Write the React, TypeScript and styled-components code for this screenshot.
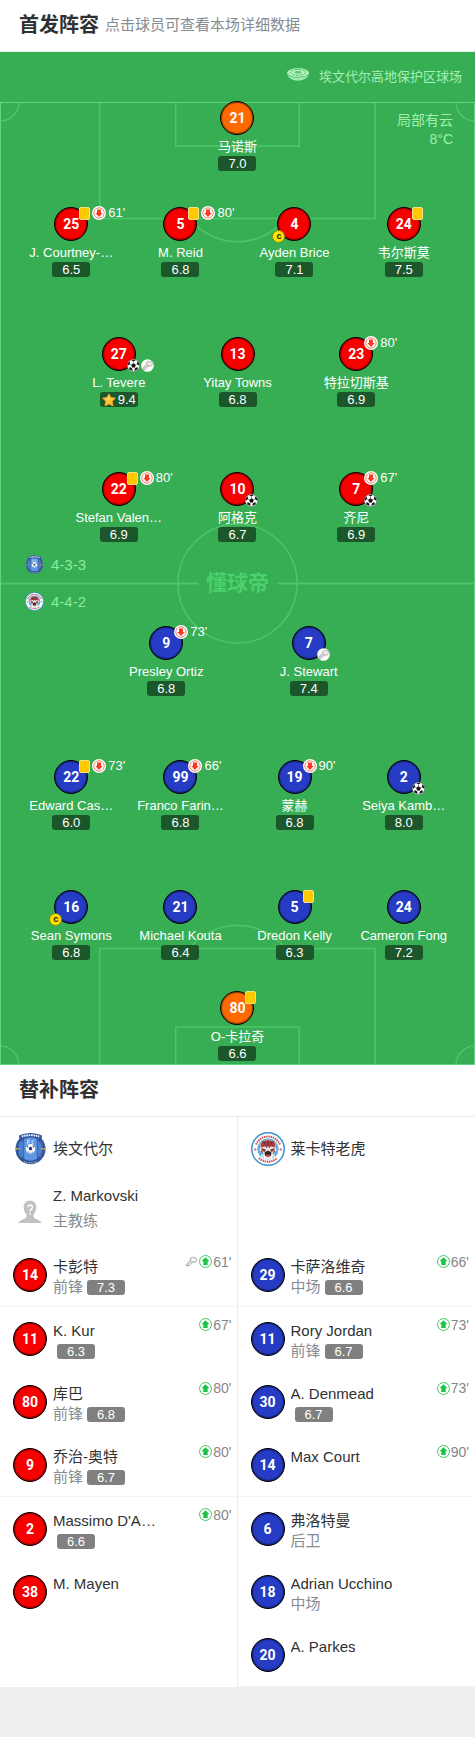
import React from "react";
import styled, { createGlobalStyle, css } from "styled-components";

const GlobalStyle = createGlobalStyle`
  * { box-sizing: border-box; }
  body {
    margin: 0;
    background: #eeeff1;
    color: #303133;
    font-family: "Liberation Sans", "Noto Sans CJK SC", sans-serif;
  }
  h2, h3, p, ul { margin: 0; padding: 0; font-weight: normal; }
  ul { list-style: none; }
`;

type Tone = "red" | "blue" | "orange";

interface Player {
  no: number;
  name: string;
  rating: string;
  card?: boolean;
  off?: string;
  goal?: boolean;
  assist?: boolean;
  captain?: boolean;
  best?: boolean;
}

interface Line {
  space: number;
  tone: Tone;
  players: Player[];
}

interface Substitute {
  no: number;
  name: string;
  role?: string;
  rating?: string;
  on?: string;
  assist?: boolean;
}

const lines: Line[] = [
  { space: 36, tone: "orange", players: [{ no: 21, name: "马诺斯", rating: "7.0" }] },
  {
    space: 60,
    tone: "red",
    players: [
      { no: 25, name: "J. Courtney-…", rating: "6.5", card: true, off: "61'" },
      { no: 5, name: "M. Reid", rating: "6.8", card: true, off: "80'" },
      { no: 4, name: "Ayden Brice", rating: "7.1", captain: true },
      { no: 24, name: "韦尔斯莫", rating: "7.5", card: true },
    ],
  },
  {
    space: 65,
    tone: "red",
    players: [
      { no: 27, name: "L. Tevere", rating: "9.4", goal: true, assist: true, best: true },
      { no: 13, name: "Yitay Towns", rating: "6.8" },
      { no: 23, name: "特拉切斯基", rating: "6.9", off: "80'" },
    ],
  },
  {
    space: 84,
    tone: "red",
    players: [
      { no: 22, name: "Stefan Valen…", rating: "6.9", card: true, off: "80'" },
      { no: 10, name: "阿格克", rating: "6.7", goal: true },
      { no: 7, name: "齐尼", rating: "6.9", off: "67'", goal: true },
    ],
  },
  {
    space: 64,
    tone: "blue",
    players: [
      { no: 9, name: "Presley Ortiz", rating: "6.8", off: "73'" },
      { no: 7, name: "J. Stewart", rating: "7.4", assist: true },
    ],
  },
  {
    space: 60,
    tone: "blue",
    players: [
      { no: 22, name: "Edward Cas…", rating: "6.0", card: true, off: "73'" },
      { no: 99, name: "Franco Farin…", rating: "6.8", off: "66'" },
      { no: 19, name: "蒙赫", rating: "6.8", off: "90'" },
      { no: 2, name: "Seiya Kamb…", rating: "8.0", goal: true },
    ],
  },
  {
    space: 31,
    tone: "blue",
    players: [
      { no: 16, name: "Sean Symons", rating: "6.8", captain: true },
      { no: 21, name: "Michael Kouta", rating: "6.4" },
      { no: 5, name: "Dredon Kelly", rating: "6.3", card: true },
      { no: 24, name: "Cameron Fong", rating: "7.2" },
    ],
  },
  { space: 4, tone: "orange", players: [{ no: 80, name: "O-卡拉奇", rating: "6.6", card: true }] },
];

const homeBench: Substitute[] = [
  { no: 14, name: "卡彭特", role: "前锋", rating: "7.3", on: "61'", assist: true },
  { no: 11, name: "K. Kur", rating: "6.3", on: "67'" },
  { no: 80, name: "库巴", role: "前锋", rating: "6.8", on: "80'" },
  { no: 9, name: "乔治-奥特", role: "前锋", rating: "6.7", on: "80'" },
  { no: 2, name: "Massimo D'A…", rating: "6.6", on: "80'" },
  { no: 38, name: "M. Mayen" },
];

const awayBench: Substitute[] = [
  { no: 29, name: "卡萨洛维奇", role: "中场", rating: "6.6", on: "66'" },
  { no: 11, name: "Rory Jordan", role: "前锋", rating: "6.7", on: "73'" },
  { no: 30, name: "A. Denmead", rating: "6.7", on: "73'" },
  { no: 14, name: "Max Court", on: "90'" },
  { no: 6, name: "弗洛特曼", role: "后卫" },
  { no: 18, name: "Adrian Ucchino", role: "中场" },
  { no: 20, name: "A. Parkes" },
];

/* ---------- layout ---------- */

const Page = styled.main`
  width: 100%;
`;

const SectionHeader = styled.header`
  display: flex;
  align-items: center;
  gap: 6px;
  height: 52px;
  padding: 0 19px 1px;
  background: #fff;
  border-bottom: 1px solid #ebebeb;
`;

const Title = styled.h2`
  font-size: 20px;
  font-weight: bold;
  line-height: 28px;
`;

const Hint = styled.p`
  font-size: 15px;
  line-height: 22px;
  color: #868b91;
`;

const Starters = styled.section`
  background: #37ae54;
`;

const Venue = styled.div`
  display: flex;
  justify-content: flex-end;
  align-items: center;
  gap: 10px;
  height: 49px;
  padding: 0 13px;
  font-size: 13px;
  line-height: 20px;
  color: #a5f0b4;

  svg {
    margin-bottom: 4px;
  }
`;

const Pitch = styled.div`
  position: relative;
`;

const Markings = styled.svg`
  position: absolute;
  top: 1px;
  left: 0;
  width: 100%;
  height: calc(100% - 1px);
  fill: none;
  stroke: #4dc56b;
  stroke-width: 1.5;
`;

const Watermark = styled.span`
  position: absolute;
  top: 50%;
  left: 50%;
  transform: translate(-50%, -50%);
  padding: 0 8px;
  background: #37ae54;
  color: #4ad06c;
  font-size: 21px;
  font-weight: bold;
  line-height: 24px;
`;

const Weather = styled.p`
  position: absolute;
  top: 10px;
  right: 22px;
  font-size: 14px;
  line-height: 19px;
  text-align: right;
  color: #a0eeb0;
`;

const Formations = styled.div`
  position: absolute;
  top: 50%;
  left: 25px;
  transform: translateY(-50%);
  display: grid;
  gap: 18px;
`;

const Formation = styled.p`
  display: flex;
  align-items: center;
  gap: 7px;
  font-size: 15px;
  line-height: 19px;
  color: #8deb9f;
`;

const LineUp = styled.div`
  position: relative;
`;

const Row = styled.div<{ $space: number }>`
  display: flex;
  justify-content: center;
  padding-bottom: ${(p) => p.$space}px;
`;

const cellWidth: Record<number, string> = { 1: "25%", 2: "30%", 3: "25%", 4: "23%" };

const Cell = styled.div<{ $count: number }>`
  display: flex;
  justify-content: center;
  width: ${(p) => cellWidth[p.$count]};
  ${(p) =>
    p.$count === 4 &&
    css`
      &:nth-child(3) {
        margin-left: 1%;
      }
    `}
`;

const PlayerButton = styled.button`
  display: flex;
  flex-direction: column;
  align-items: center;
  padding: 0;
  border: 0;
  background: none;
  color: #fff;
  font: inherit;
  font-size: 13px;
  white-space: nowrap;
  cursor: pointer;
`;

const Shirt = styled.span`
  position: relative;
  width: 34px;
  height: 34px;
`;

const tones: Record<Tone, string> = { red: "#f70000", blue: "#263cc4", orange: "#ff6a00" };

const ShirtNumber = styled.span<{ $tone: Tone }>`
  display: flex;
  flex: none;
  justify-content: center;
  align-items: center;
  width: 34px;
  height: 34px;
  border: 1px solid #000;
  border-radius: 50%;
  box-shadow: inset 0 0 1px 1px rgba(0, 0, 0, 0.45);
  background: ${(p) => tones[p.$tone]};
  color: #fff;
  font-family: Roboto, sans-serif;
  font-size: 14px;
  font-weight: bold;
  line-height: 16px;
`;

const Events = styled.span<{ $edge: "top" | "bottom" }>`
  position: absolute;
  left: 25px;
  ${(p) => p.$edge}: -1px;
  display: flex;
  align-items: center;
  gap: ${(p) => (p.$edge === "top" ? 2 : 1)}px;
  height: 14px;
  line-height: 14px;
`;

const Captain = styled.span`
  position: absolute;
  left: -5px;
  bottom: -2px;
  width: 13px;
  height: 13px;
  border: 1px solid #8a8a10;
  border-radius: 50%;
  background: #ffe100;
  color: #222;
  font-size: 9px;
  font-weight: bold;
  line-height: 10px;
  text-align: center;
`;

const YellowCard = styled.span`
  width: 11px;
  height: 13px;
  border: 1px solid #f5de8c;
  border-radius: 2px;
  background: #ffc900;
`;

const PlayerName = styled.span`
  padding-top: 3px;
  line-height: 18px;
`;

const Rating = styled.span<{ $bench?: boolean }>`
  display: flex;
  justify-content: center;
  align-items: center;
  gap: 2px;
  width: 38px;
  height: 15px;
  margin-left: ${(p) => (p.$bench ? 4 : 0)}px;
  border-radius: 3px;
  background: ${(p) => (p.$bench ? "#808080" : "#1b572a")};
  color: #fff;
  font-size: 13px;
  line-height: 15px;
`;

const Bench = styled.section`
  display: grid;
  grid-template-columns: 1fr 1fr;
  min-height: 570px;
  background: #fff;
`;

const BenchList = styled.ul`
  display: grid;
  grid-template-columns: minmax(0, 1fr);
  grid-template-rows: repeat(9, 1fr);
  & + & {
    border-left: 1px solid #ebebeb;
    margin-left: -1px;
  }
`;

const BenchRow = styled.li`
  display: flex;
  align-items: center;
  gap: 6px;
  padding: 0 6px 0 13px;
  &:nth-child(3n) {
    border-bottom: 1px solid #f5f5f5;
  }
`;

const Emblem = styled.span`
  display: flex;
  flex: none;
  align-items: center;
  justify-content: center;
  width: 34px;
  height: 34px;
`;

const TeamName = styled.h3`
  font-size: 15px;
  line-height: 22px;
`;

const Person = styled.div<{ $staff?: boolean }>`
  flex: 1;
  min-width: 0;
  font-size: 15px;
  line-height: ${(p) => (p.$staff ? 25 : 20)}px;
  padding: ${(p) => (p.$staff ? "0 0 7px" : "5px 0 0")};
`;

const PersonName = styled.p`
  overflow: hidden;
  text-overflow: ellipsis;
  white-space: nowrap;
`;

const Detail = styled.div`
  display: flex;
  align-items: center;
  min-height: 20px;
  color: #868b91;
`;

const Entry = styled.span`
  display: flex;
  align-self: flex-start;
  align-items: center;
  gap: 1px;
  margin-top: 8px;
  font-size: 14px;
  line-height: 20px;
  color: #868686;
`;

/* ---------- drawings ---------- */

const SubOff = () => (
  <svg width="14" height="14" viewBox="0 0 14 14" aria-label="换下">
    <circle cx="7" cy="7" r="7" fill="#fff" />
    <circle cx="7" cy="7" r="5.2" fill="none" stroke="#f0644a" strokeWidth="0.8" />
    <path d="M5 3.6h4v3.4h1.700L7 10.900 3.300 7h1.700z" fill="#fb3a22" />
  </svg>
);

const SubOn = () => (
  <svg width="13" height="13" viewBox="0 0 12 12" aria-label="换上">
    <circle cx="6" cy="6" r="5.5" fill="#fff" stroke="#3cc65a" strokeWidth="0.9" />
    <path d="M6 2 9.700 5.700H8V9.300H4V5.700H2.300z" fill="#1fc144" />
  </svg>
);

const Ball = () => (
  <svg width="13" height="13" viewBox="0 0 26 26" aria-label="进球">
    <circle cx="13" cy="13" r="12.4" fill="#fff" stroke="#555" strokeWidth="1" />
    <path
      d="M13 8.4l4.6 3.3-1.8 5.3h-5.6l-1.8-5.3zM8.4 1.8h9.2L13 5.2zM1.2 9.4l4.4-5 .4 5.5-4.4 3.6zM24.8 9.4l-4.4-5-.4 5.5 4.4 3.6zM4.2 20.6l1.2-4.8 4.9 3.3 1 5zM21.8 20.6l-1.2-4.8-4.9 3.3-1 5z"
      fill="#111"
    />
    <path d="M13 5v3.5M6 10l2.5 1.8M20 10l-2.5 1.8M10.2 17l-1.5 2.5M15.8 17l1.5 2.5" stroke="#333" strokeWidth="1" />
  </svg>
);

const bootPath = "M2.500 19 11 10.500 11.500 6 15 4.500 17.500 6 20.500 5 23 8.500 21.500 13.500 15 14.500 8.500 20.500 3.500 22z";

const Boot = ({ disc }: { disc?: boolean }) => (
  <svg width="13" height="13" viewBox="0 0 26 26" aria-label="助攻">
    {disc && <circle cx="13" cy="13" r="12.6" fill="#fff" />}
    <path d={bootPath} fill={disc ? "#eee" : "#fff"} stroke={disc ? "#999" : "#777"} strokeWidth="1.400" strokeLinejoin="round" />
    <path d="M11 10.500l5 3.500M4.500 20l9-7.500" stroke="#888" strokeWidth="1.200" />
  </svg>
);

const Star = () => (
  <svg width="14" height="14" viewBox="0 0 14 14" aria-label="最佳">
    <path
      d="M7 .8l1.9 3.7 4.500.7-3.200 3.100.8 4.600L7 10.900l-4 2 .8-4.600L.6 5.200l4.500-.7z"
      fill="#ffc233"
      stroke="#f8a21f"
      strokeWidth="0.9"
      strokeLinejoin="round"
    />
    <path d="M7 2.500L5.800 5.400 3 5.800 7 7z" fill="#ffe58a" />
  </svg>
);

const StadiumIcon = () => (
  <svg width="22" height="13" viewBox="0 0 22 13" aria-hidden="true">
    <path d="M0 5.200C0 2.300 5 .2 11 .2s11 2.100 11 5c0 1-.5 1.800-1 2.500-1.500 2.800-5.500 4.800-10 4.800S2.500 10.500 1 7.700C.5 7 0 6.200 0 5.200z" fill="#b4f5c0" />
    <ellipse cx="11" cy="4.300" rx="7.600" ry="2.900" fill="none" stroke="#37ae54" strokeWidth="0.8" strokeDasharray="3 .7" />
    <ellipse cx="11" cy="4.200" rx="3.600" ry="1.200" fill="#5cc676" />
    <path d="M.4 6c3 4.500 18.200 4.500 21.200 0" fill="none" stroke="#37ae54" strokeWidth="0.8" />
    <path d="M2.500 9c4 3 13 3 17 0" fill="none" stroke="#6fd487" strokeWidth="0.500" />
  </svg>
);

const HomeCrest = ({ size }: { size: number }) => (
  <svg width={size} height={size} viewBox="0 0 34 34" aria-hidden="true">
    <ellipse cx="17" cy="17.500" rx="15.500" ry="15.800" fill="#2f55a4" />
    <path d="M5 3.800C12 0 22 0 29 3.800L27.500 10h-21z" fill="#2f55a4" />
    <circle cx="17" cy="17.500" r="11.800" fill="#4a80cf" />
    <path d="M10 7.500c4-2 10-2 14 0v19.800c-4 2.600-10 2.600-14 0z" fill="#5f97e2" />
    <path d="M10 7.500v19.800M24 7.500v19.800" stroke="#2f62b5" strokeWidth="1" />
    <path d="M8 4.700c5.500-2 12.500-2 18 0" fill="none" stroke="#e6edf9" strokeWidth="2" strokeDasharray="1.800 .6" />
    <path d="M10.500 30.500c4 1.700 9 1.700 13 0" fill="none" stroke="#a9a68b" strokeWidth="1.500" strokeDasharray="1.400 1" />
    <path d="M14 8.500v4M14 8.500h2.500M14 10.500h2M20.500 8.900c-2.500-1-2.500 4 0 3.200" fill="none" stroke="#d5e3fa" strokeWidth="1" />
    <path d="M2 17.500h4M28 17.500h4" stroke="#d6c24b" strokeWidth="1.800" strokeDasharray="1.500 1" />
    <path d="M26.500 9c1.500 2 2.300 4 2.500 6M26.500 26c1.500-2 2.300-4 2.500-6" fill="none" stroke="#c4506a" strokeWidth="0.900" />
    <path d="M7.500 9C6 11 5.200 13 5 15M7.500 26C6 24 5.200 22 5 20" fill="none" stroke="#5fae7d" strokeWidth="0.900" />
    <circle cx="17" cy="17.300" r="4.900" fill="#fff" />
    <path d="M17 15l2 1.500-.8 2.400h-2.400l-.8-2.400zM12.800 14.500l2-.6-.6 2.200zM21.200 14.500l-2-.6.6 2.200zM14 20.500l1.500-.4.5 1.600zM20 20.500l-1.500-.4-.5 1.600z" fill="#243d79" />
  </svg>
);

const AwayCrest = ({ size }: { size: number }) => (
  <svg width={size} height={size} viewBox="0 0 34 34" aria-hidden="true">
    <circle cx="17" cy="17" r="16.200" fill="#fff" stroke="#3a92cf" strokeWidth="1.500" />
    <path d="M5.200 12.500a12.700 12.700 0 0 1 23.600 0" fill="none" stroke="#c4474f" strokeWidth="2" strokeDasharray="1.400 .8" />
    <path d="M8 26a12.700 12.700 0 0 0 18 0" fill="none" stroke="#c4474f" strokeWidth="2" strokeDasharray="1.400 .8" />
    <path d="M3.300 17.500h2M28.700 17.500h2" stroke="#d66067" strokeWidth="2" />
    <circle cx="17" cy="17" r="10.600" fill="#55afe0" />
    <path d="M9.500 10.500l3-1.500L17 7.500 21.500 9l3 1.500.3 4.500.7 4-3 2.500L21 27.500h-8l-1.500-6-3-2.500.7-4z" fill="#efe6e2" />
    <path d="M10 11c2-3.800 12-3.800 14 0l.4 4.500-4.400-1h-6l-4.400 1z" fill="#b23a3c" />
    <path d="M10.500 16l4.500 1.500-1 2.500-3.500-1zM23.500 16L19 17.500l1 2.500 3.500-1z" fill="#8a3f42" />
    <path d="M12.500 9.500l1.500 3M17 8.500v5M21.500 9.500l-1.500 3M9.800 19l2.200 2.500M24.200 19L22 21.500M15 14l1 2M19 14l-1 2" stroke="#3c333b" strokeWidth="1" />
    <path d="M13.500 20.500l3.500-2 3.500 2-.8 3.500h-5.400z" fill="#2a2226" />
    <path d="M15 22.500h4l-.6 2.500h-2.800z" fill="#d84747" />
    <path d="M11 22.500v4M13.500 24v3.500M20.500 24v3.500M23 22.500v4" stroke="#fff" strokeWidth="1.300" />
  </svg>
);

const CoachIcon = () => (
  <svg width="24" height="24" viewBox="0 0 24 24" aria-hidden="true">
    <path
      d="M12 .8c4 0 6.500 2.700 6.300 6.800-.1 3-1.200 5.400-2.800 7v2c.2 1.800 2.500 2.600 5 3.600 1.700.7 2.600 1.500 3 2.800H.5c.4-1.300 1.300-2.100 3-2.800 2.500-1 4.800-1.800 5-3.600v-2c-1.600-1.600-2.700-4-2.800-7C5.500 3.500 8 .8 12 .8z"
      fill="#c1c1c1"
    />
    <path d="M9.800 7.300c0-3 4.600-2.900 4.600 0 0 2-2.300 2-2.300 4.200M12.100 13v1.500" fill="none" stroke="#fff" strokeWidth="1.500" />
  </svg>
);

const PitchMarkings = () => (
  <Markings aria-hidden="true">
    <svg x="50%" y="0" overflow="visible">
      <path d="M-47.500 117a61 61 0 0 0 95 0" />
    </svg>
    <svg x="50%" y="100%" overflow="visible">
      <path d="M-47.500 -117a61 61 0 0 1 95 0" />
    </svg>
    <rect x="21%" y="0" width="58%" height="116.500" />
    <rect x="37%" y="0" width="26%" height="44" />
    <svg y="100%" overflow="visible">
      <rect x="21%" y="-116.500" width="58%" height="117" />
      <rect x="37%" y="-38" width="26%" height="38" />
    </svg>
    <line x1="0" y1="50%" x2="100%" y2="50%" strokeWidth="2" />
    <circle cx="50%" cy="50%" r="59.500" />
    <circle cx="0" cy="0" r="19" />
    <circle cx="100%" cy="0" r="19" />
    <circle cx="0" cy="100%" r="19" />
    <circle cx="100%" cy="100%" r="19" />
    <rect x="0" y="0" width="100%" height="100%" stroke="#5fd67e" strokeWidth="2" />
  </Markings>
);

/* ---------- parts ---------- */

const PitchPlayer = ({ player, tone }: { player: Player; tone: Tone }) => (
  <PlayerButton type="button">
    <Shirt>
      <ShirtNumber $tone={tone}>{player.no}</ShirtNumber>
      {(player.card || player.off) && (
        <Events $edge="top">
          {player.card && <YellowCard />}
          {player.off && <SubOff />}
          {player.off}
        </Events>
      )}
      {(player.goal || player.assist) && (
        <Events $edge="bottom">
          {player.goal && <Ball />}
          {player.assist && <Boot disc />}
        </Events>
      )}
      {player.captain && <Captain>c</Captain>}
    </Shirt>
    <PlayerName>{player.name}</PlayerName>
    <Rating>
      {player.best && <Star />}
      {player.rating}
    </Rating>
  </PlayerButton>
);

const Substitutes = ({ list, tone }: { list: Substitute[]; tone: Tone }) => (
  <>
    {list.map((s) => (
      <BenchRow key={s.no}>
        <ShirtNumber $tone={tone}>{s.no}</ShirtNumber>
        <Person>
          <PersonName>{s.name}</PersonName>
          <Detail>
            {s.role}
            {s.rating && <Rating $bench>{s.rating}</Rating>}
          </Detail>
        </Person>
        {s.on && (
          <Entry>
            {s.assist && <Boot />}
            <SubOn />
            {s.on}
          </Entry>
        )}
      </BenchRow>
    ))}
  </>
);

export default function App() {
  return (
    <Page>
      <GlobalStyle />
      <SectionHeader>
        <Title>首发阵容</Title>
        <Hint>点击球员可查看本场详细数据</Hint>
      </SectionHeader>
      <Starters>
        <Venue>
          <StadiumIcon />
          埃文代尔高地保护区球场
        </Venue>
        <Pitch>
          <PitchMarkings />
          <Watermark>懂球帝</Watermark>
          <Weather>
            局部有云
            <br />
            8°C
          </Weather>
          <Formations>
            <Formation>
              <HomeCrest size={19} />
              4-3-3
            </Formation>
            <Formation>
              <AwayCrest size={19} />
              4-4-2
            </Formation>
          </Formations>
          <LineUp>
            {lines.map((line, i) => (
              <Row key={i} $space={line.space}>
                {line.players.map((p) => (
                  <Cell key={p.no} $count={line.players.length}>
                    <PitchPlayer player={p} tone={line.tone} />
                  </Cell>
                ))}
              </Row>
            ))}
          </LineUp>
        </Pitch>
      </Starters>
      <SectionHeader>
        <Title>替补阵容</Title>
      </SectionHeader>
      <Bench>
        <BenchList>
          <BenchRow>
            <Emblem>
              <HomeCrest size={33} />
            </Emblem>
            <TeamName>埃文代尔</TeamName>
          </BenchRow>
          <BenchRow>
            <Emblem>
              <CoachIcon />
            </Emblem>
            <Person $staff>
              <PersonName>Z. Markovski</PersonName>
              <Detail>主教练</Detail>
            </Person>
          </BenchRow>
          <Substitutes list={homeBench} tone="red" />
        </BenchList>
        <BenchList>
          <BenchRow>
            <Emblem>
              <AwayCrest size={34} />
            </Emblem>
            <TeamName>莱卡特老虎</TeamName>
          </BenchRow>
          <BenchRow />
          <Substitutes list={awayBench} tone="blue" />
        </BenchList>
      </Bench>
    </Page>
  );
}
